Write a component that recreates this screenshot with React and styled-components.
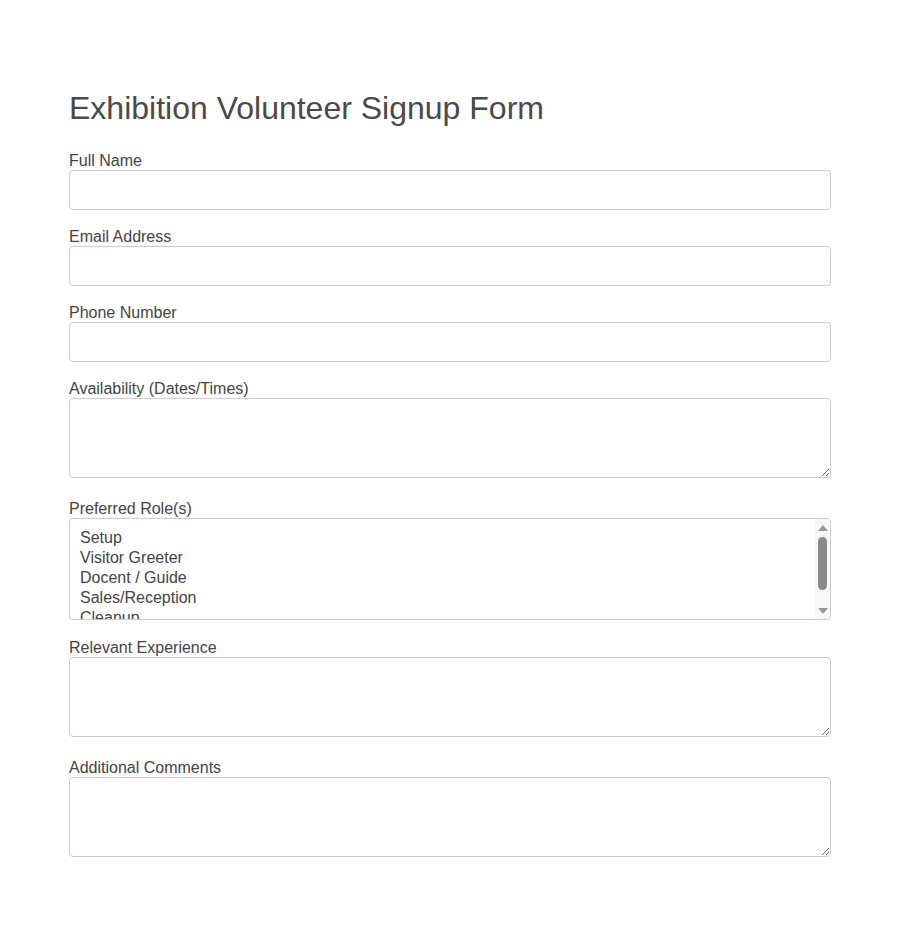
import React from "react";
import styled, { createGlobalStyle } from "styled-components";

const GlobalStyle = createGlobalStyle`
  html, body {
    margin: 0;
    padding: 0;
    background: #ffffff;
  }
  body {
    font-family: "Liberation Sans", Arial, sans-serif;
    color: #444444;
  }
`;

const roles = [
  "Setup",
  "Visitor Greeter",
  "Docent / Guide",
  "Sales/Reception",
  "Cleanup",
  "Security",
  "Technical Support",
];

const fields = [
  { id: "fullName", label: "Full Name", kind: "input", type: "text" },
  { id: "email", label: "Email Address", kind: "input", type: "email" },
  { id: "phone", label: "Phone Number", kind: "input", type: "tel" },
  { id: "availability", label: "Availability (Dates/Times)", kind: "textarea" },
  { id: "roles", label: "Preferred Role(s)", kind: "select" },
  { id: "experience", label: "Relevant Experience", kind: "textarea" },
  { id: "comments", label: "Additional Comments", kind: "textarea" },
];

// space under each kind of field
const gapAfter = { input: 18, textarea: 22, select: 19 };

function App() {
  return (
    <>
      <GlobalStyle />
      <Page>
        <Title>Exhibition Volunteer Signup Form</Title>
        <Form onSubmit={(e) => e.preventDefault()}>
          {fields.map((field) => (
            <Group key={field.id} gap={gapAfter[field.kind]}>
              <Label htmlFor={field.id}>{field.label}</Label>
              {field.kind === "input" && (
                <TextInput id={field.id} type={field.type} />
              )}
              {field.kind === "textarea" && <TextArea id={field.id} />}
              {field.kind === "select" && (
                <SelectWrap>
                  <RoleSelect id={field.id} multiple>
                    {roles.map((role) => (
                      <option key={role} value={role}>
                        {role}
                      </option>
                    ))}
                  </RoleSelect>
                  {/* listbox scrollbar, drawn so it shows in every browser */}
                  <Scrollbar aria-hidden="true">
                    <Arrow />
                    <Thumb />
                    <Arrow down />
                  </Scrollbar>
                </SelectWrap>
              )}
            </Group>
          ))}
        </Form>
      </Page>
    </>
  );
}

export default App;

const Page = styled.div`
  width: 762px;
  margin: 0 auto;
  padding: 88px 0 60px;
`;

const Title = styled.h1`
  margin: 0 0 24px;
  font: 32px/40px "Liberation Sans", Arial, sans-serif;
  font-weight: normal;
  color: #4a4a4a;
`;

const Form = styled.form`
  display: flex;
  flex-direction: column;
`;

const Group = styled.div`
  display: flex;
  flex-direction: column;
  margin-bottom: ${(p) => p.gap}px;
`;

const Label = styled.label`
  display: block;
  height: 18px;
  font: 16px/18px "Liberation Sans", Arial, sans-serif;
  color: #444444;
`;

const fieldBase = `
  box-sizing: border-box;
  width: 100%;
  border: 1px solid #cccccc;
  border-radius: 4px;
  background: #ffffff;
  font: 16px/20px "Liberation Sans", Arial, sans-serif;
  color: #444444;
  outline: none;
`;

const TextInput = styled.input`
  ${fieldBase}
  height: 40px;
  padding: 8px 10px;
`;

const TextArea = styled.textarea`
  ${fieldBase}
  height: 80px;
  padding: 8px 10px;
  resize: vertical;
`;

const SelectWrap = styled.div`
  position: relative;
`;

const RoleSelect = styled.select`
  ${fieldBase}
  display: block;
  height: 102px;
  padding: 10px 10px 6px;
  overflow: hidden;

  option {
    height: 20px;
    padding: 0;
    line-height: 20px;
    color: #444444;
  }
`;

const Scrollbar = styled.div`
  position: absolute;
  top: 1px;
  right: 1px;
  bottom: 1px;
  width: 15px;
  display: flex;
  flex-direction: column;
  align-items: center;
  background: #f8f8f8;
  border-radius: 0 3px 3px 0;
  pointer-events: none;
`;

const Arrow = styled.span`
  width: 0;
  height: 0;
  margin-top: ${(p) => (p.down ? "auto" : "6px")};
  margin-bottom: ${(p) => (p.down ? "5px" : "0")};
  border-left: 5px solid transparent;
  border-right: 5px solid transparent;
  ${(p) =>
    p.down
      ? "border-top: 6px solid #999999;"
      : "border-bottom: 6px solid #999999;"}
`;

const Thumb = styled.span`
  width: 9px;
  height: 53px;
  margin-top: 6px;
  border-radius: 5px;
  background: #8a8a8a;
`;
